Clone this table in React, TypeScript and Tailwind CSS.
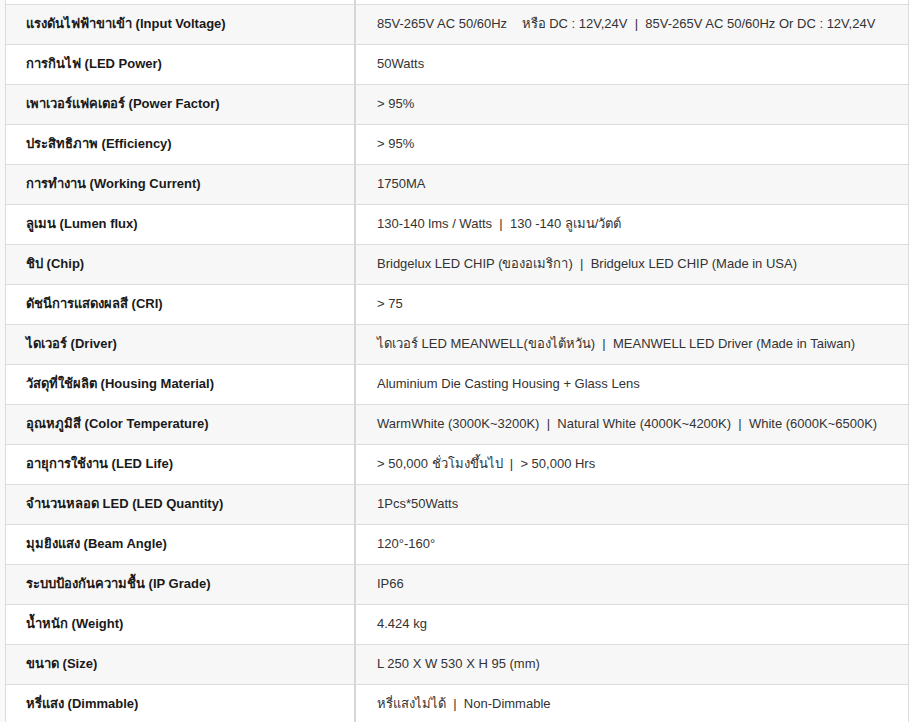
import React from "react";

const rows: [string, React.ReactNode][] = [
  ["แรงดันไฟฟ้าขาเข้า (Input Voltage)", <>85V-265V AC 50/60Hz&nbsp;&nbsp;&nbsp;&nbsp;หรือ DC : 12V,24V&nbsp;&nbsp;|&nbsp;&nbsp;85V-265V AC 50/60Hz Or DC : 12V,24V</>],
  ["การกินไฟ (LED Power)", "50Watts"],
  ["เพาเวอร์แฟคเตอร์ (Power Factor)", "> 95%"],
  ["ประสิทธิภาพ (Efficiency)", "> 95%"],
  ["การทำงาน (Working Current)", "1750MA"],
  ["ลูเมน (Lumen flux)", <>130-140 lms / Watts&nbsp;&nbsp;|&nbsp;&nbsp;130 -140 ลูเมน/วัตต์</>],
  ["ชิป (Chip)", <>Bridgelux LED CHIP (ของอเมริกา)&nbsp;&nbsp;|&nbsp;&nbsp;Bridgelux LED CHIP (Made in USA)</>],
  ["ดัชนีการแสดงผลสี (CRI)", "> 75"],
  ["ไดเวอร์ (Driver)", <>ไดเวอร์ LED MEANWELL(ของไต้หวัน)&nbsp;&nbsp;|&nbsp;&nbsp;MEANWELL LED Driver (Made in Taiwan)</>],
  ["วัสดุที่ใช้ผลิต (Housing Material)", "Aluminium Die Casting Housing + Glass Lens"],
  ["อุณหภูมิสี (Color Temperature)", <>WarmWhite (3000K~3200K)&nbsp;&nbsp;|&nbsp;&nbsp;Natural White (4000K~4200K)&nbsp;&nbsp;|&nbsp;&nbsp;White (6000K~6500K)</>],
  ["อายุการใช้งาน (LED Life)", <>&gt; 50,000 ชั่วโมงขึ้นไป&nbsp;&nbsp;|&nbsp;&nbsp;&gt; 50,000 Hrs</>],
  ["จำนวนหลอด LED (LED Quantity)", "1Pcs*50Watts"],
  ["มุมยิงแสง (Beam Angle)", "120°-160°"],
  ["ระบบป้องกันความชื้น (IP Grade)", "IP66"],
  ["น้ำหนัก (Weight)", "4.424 kg"],
  ["ขนาด (Size)", "L 250 X W 530 X H 95 (mm)"],
  ["หรี่แสง (Dimmable)", <>หรี่แสงไม่ได้&nbsp;&nbsp;|&nbsp;&nbsp;Non-Dimmable</>],
];

export default function App() {
  return (
    <div
      className="w-[910px] h-[722px] overflow-hidden bg-white flex"
      style={{ fontFamily: '"Liberation Sans", Arial, "Noto Sans", sans-serif' }}
    >
      <div className="w-[6px] bg-[#f9f9f9] border-r border-[#dcdcdc] shrink-0" />
      <div className="w-[903px] border-r border-[#dcdcdc] flex flex-col">
        <div className="h-[4px] flex shrink-0">
          <div className="w-[350px] border-r-2 border-[#d6d6d6]" />
          <div className="flex-1" />
        </div>
        {rows.map(([label, value], i) => (
          <div
            key={i}
            className={`h-[40px] shrink-0 flex border-t border-[#dcdcdc] ${i % 2 === 0 ? "bg-[#f7f7f7]" : "bg-white"}`}
          >
            <div className="w-[350px] border-r-2 border-[#d6d6d6] pl-[20px] pb-[1px] flex items-center text-[13px] font-bold text-[#1a1a1a] whitespace-nowrap">
              {label}
            </div>
            <div className="flex-1 pl-[21px] pb-[1px] flex items-center text-[13px] text-[#333] whitespace-nowrap">
              {value}
            </div>
          </div>
        ))}
      </div>
    </div>
  );
}
